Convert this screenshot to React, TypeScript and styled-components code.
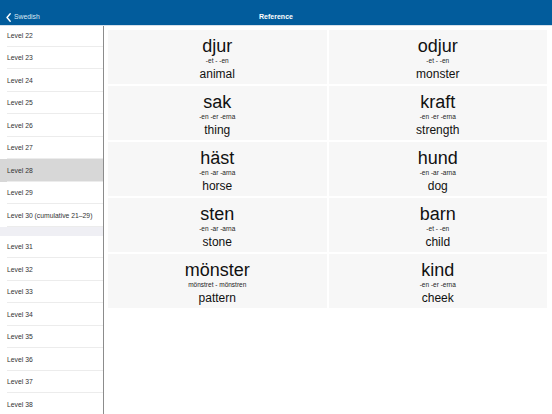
import React from 'react'
import styled, { createGlobalStyle } from 'styled-components'

const GlobalStyle = createGlobalStyle`
  html, body {
    margin: 0;
    padding: 0;
    background: #ffffff;
    font-family: "Liberation Sans", Arial, sans-serif;
  }
  * { box-sizing: border-box; }
`

type Level = { label: string; selected?: boolean; gapBefore?: boolean }

const levels: Level[] = [
  { label: 'Level 22' },
  { label: 'Level 23' },
  { label: 'Level 24' },
  { label: 'Level 25' },
  { label: 'Level 26' },
  { label: 'Level 27' },
  { label: 'Level 28', selected: true },
  { label: 'Level 29' },
  { label: 'Level 30 (cumulative 21–29)' },
  { label: 'Level 31', gapBefore: true },
  { label: 'Level 32' },
  { label: 'Level 33' },
  { label: 'Level 34' },
  { label: 'Level 35' },
  { label: 'Level 36' },
  { label: 'Level 37' },
  { label: 'Level 38' },
]

type Word = { word: string; forms: string; meaning: string }

const words: Word[] = [
  { word: 'djur', forms: '-et - -en', meaning: 'animal' },
  { word: 'odjur', forms: '-et - -en', meaning: 'monster' },
  { word: 'sak', forms: '-en -er -erna', meaning: 'thing' },
  { word: 'kraft', forms: '-en -er -erna', meaning: 'strength' },
  { word: 'häst', forms: '-en -ar -arna', meaning: 'horse' },
  { word: 'hund', forms: '-en -ar -arna', meaning: 'dog' },
  { word: 'sten', forms: '-en -ar -arna', meaning: 'stone' },
  { word: 'barn', forms: '-et - -en', meaning: 'child' },
  { word: 'mönster', forms: 'mönstret - mönstren', meaning: 'pattern' },
  { word: 'kind', forms: '-en -er -erna', meaning: 'cheek' },
]

const App = () => {
  return (
    <>
      <GlobalStyle />
      <Screen>
        <Header>
          <Back>
            <svg width="5" height="9" viewBox="0 0 5 9">
              <path d="M4.2 0.8 L1 4.5 L4.2 8.2" fill="none" stroke="#ffffff" strokeWidth="1.4" strokeLinecap="round" strokeLinejoin="round" />
            </svg>
            <span>Swedish</span>
          </Back>
          <Title>Reference</Title>
        </Header>
        <Body>
          <Sidebar>
            <List>
              {levels.map((l) => (
                <React.Fragment key={l.label}>
                  {l.gapBefore && <SectionGap />}
                  <Row selected={l.selected}>
                    <RowLabel>{l.label}</RowLabel>
                  </Row>
                </React.Fragment>
              ))}
            </List>
          </Sidebar>
          <Main>
            <Grid>
              {words.map((w) => (
                <Cell key={w.word}>
                  <Term>{w.word}</Term>
                  <Forms>{w.forms}</Forms>
                  <Meaning>{w.meaning}</Meaning>
                </Cell>
              ))}
            </Grid>
          </Main>
        </Body>
      </Screen>
    </>
  )
}

export default App

const Screen = styled.div`
  width: 552px;
  height: 414px;
  display: flex;
  flex-direction: column;
  overflow: hidden;
`

const Header = styled.div`
  height: 26px;
  flex-shrink: 0;
  background-color: #025c9c;
  border-bottom: 1px solid #d4dfea;
  display: flex;
  align-items: center;
  justify-content: center;
  position: relative;
  padding-top: 8px;
`

const Back = styled.div`
  position: absolute;
  left: 6px;
  top: 12px;
  display: flex;
  align-items: center;
  gap: 3px;
  color: #dce9f5;
  font-size: 6.8px;
  line-height: 10px;
`

const Title = styled.div`
  color: #ffffff;
  font-size: 7px;
  line-height: 10px;
  font-weight: bold;
`

const Body = styled.div`
  flex: 1;
  display: flex;
  min-height: 0;
`

const Sidebar = styled.div`
  width: 104px;
  flex-shrink: 0;
  border-right: 1px solid #8c8c8c;
  overflow: hidden;
`

const List = styled.div`
  margin-top: -2px;
  display: flex;
  flex-direction: column;
`

const Row = styled.div<{ selected?: boolean }>`
  height: 22.5px;
  flex-shrink: 0;
  padding-left: 7px;
  display: flex;
  align-items: center;
  background-color: ${(p) => (p.selected ? '#d7d7d7' : '#ffffff')};
  position: relative;
  &::after {
    content: '';
    position: absolute;
    left: 7px;
    right: 0;
    bottom: 0;
    height: 1px;
    background-color: #ececec;
  }
`

const RowLabel = styled.span`
  font-size: 6.8px;
  color: #333333;
  white-space: nowrap;
`

const SectionGap = styled.div`
  height: 9px;
  flex-shrink: 0;
  background-color: #efeff4;
`

const Main = styled.div`
  flex: 1;
  padding: 4px 5px 0 4px;
`

const Grid = styled.div`
  display: grid;
  grid-template-columns: 1fr 1fr;
  grid-auto-rows: 54px;
  gap: 2px;
`

const Cell = styled.div`
  background-color: #f7f7f7;
  display: flex;
  flex-direction: column;
  align-items: center;
  padding-top: 6px;
  color: #111111;
`

const Term = styled.div`
  font-size: 18px;
  line-height: 20px;
`

const Forms = styled.div`
  font-size: 6.5px;
  line-height: 9px;
  color: #222222;
`

const Meaning = styled.div`
  font-size: 12px;
  line-height: 16px;
  margin-top: 1px;
`
